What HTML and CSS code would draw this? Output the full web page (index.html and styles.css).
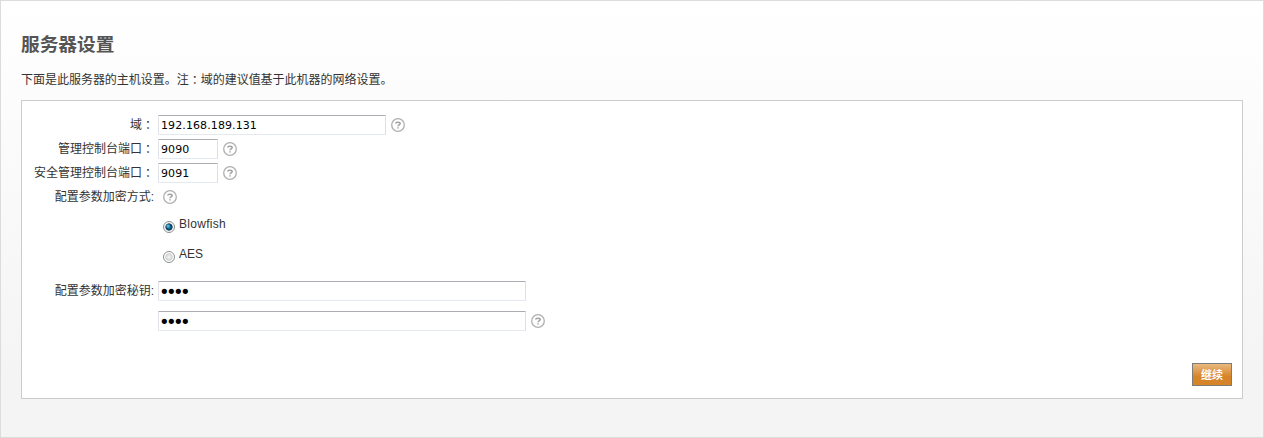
FILE: index.html
```
<!DOCTYPE html>
<html lang="zh-CN">
<head>
  <meta charset="UTF-8" />
  <title>服务器设置</title>
  <link rel="stylesheet" href="styles.css">
</head>
<body>

  <svg class="defs" width="0" height="0">
    <symbol id="help" viewBox="0 0 14 14">
      <circle cx="7" cy="7" r="6.3" fill="#fff" stroke="#b0b0b0" stroke-width="1.3" />
      <path d="M4.8 5.6C4.8 3.9 9.2 3.9 9.2 5.6C9.2 6.9 7 6.8 7 8.3M7 9.2V10.4" fill="none" stroke="#a0a0a0" stroke-width="1.5" />
    </symbol>
  </svg>

  <main>
    <h1>服务器设置</h1>
    <p>下面是此服务器的主机设置。注<span class="colon" lang="zh-TW">：</span>域的建议值基于此机器的网络设置。</p>

    <form class="panel">
      <div class="row">
        <label for="domain">域<span class="colon" lang="zh-TW">：</span></label>
        <input type="text" id="domain" class="medium" value="192.168.189.131">
        <svg class="help"><use href="#help" /></svg>
      </div>
      <div class="row">
        <label for="port">管理控制台端口<span class="colon" lang="zh-TW">：</span></label>
        <input type="text" id="port" class="short" value="9090">
        <svg class="help"><use href="#help" /></svg>
      </div>
      <div class="row">
        <label for="securePort">安全管理控制台端口<span class="colon" lang="zh-TW">：</span></label>
        <input type="text" id="securePort" class="short" value="9091">
        <svg class="help"><use href="#help" /></svg>
      </div>
      <div class="row">
        <label>配置参数加密方式:</label>
        <svg class="help"><use href="#help" /></svg>
      </div>

      <div class="options">
        <label class="option"><input type="radio" name="algorithm" checked><span>Blowfish</span></label>
        <label class="option"><input type="radio" name="algorithm"><span>AES</span></label>
      </div>

      <div class="row key">
        <label for="key">配置参数加密秘钥:</label>
        <input type="password" id="key" class="long" value="1234">
      </div>
      <div class="row key">
        <label></label>
        <input type="password" class="long" value="1234">
        <svg class="help"><use href="#help" /></svg>
      </div>

      <div class="buttons">
        <button type="button">继续</button>
      </div>
    </form>
  </main>

</body>
</html>
```
FILE: styles.css
```
* {
  box-sizing: border-box;
}

body {
  margin: 0;
  font-family: "Liberation Sans", "Noto Sans CJK SC", sans-serif;
  font-size: 12px;
  color: #333;
}

.defs {
  display: block;
}

main {
  height: 438px;
  padding: 31px 20px 0;
  border: 1px solid #dcdcdc;
  background: linear-gradient(#fff, #f4f4f4 380px);
}

h1 {
  margin: 0;
  font-size: 18.7px;
  line-height: 26px;
  color: #555;
}

p {
  margin: 13px 0 10px;
  line-height: 19px;
  letter-spacing: -0.02px;
}

/* the TC face centres the full-width colon */
.colon {
  font-family: "Noto Sans CJK TC", sans-serif;
  line-height: 1;
  vertical-align: -1px;
}

.panel {
  height: 299px;
  padding: 14px 10px 0 11px;
  border: 1px solid #ccc;
  background: #fff;
}

.row {
  display: flex;
  height: 20px;
  margin-bottom: 4px;
}

.row label {
  width: 121px;
  margin-right: 4px;
  line-height: 20px;
  text-align: right;
  white-space: nowrap;
}

input[type="text"],
input[type="password"] {
  height: 20px;
  margin: 0 5px 0 0;
  padding: 1px 2px 0;
  border: 1px solid;
  border-color: #abadb3 #dbdfe6 #e3e9ef #e2e3ea;
  border-radius: 1px;
  font-family: "DejaVu Sans", sans-serif;
  font-size: 11px;
  letter-spacing: 0.1px;
  color: #000;
  background: #fff;
}

input[type="password"] {
  padding-left: 0;
  font-size: 18px;
  letter-spacing: -3.6px;
}

.short {
  width: 60px;
}

.medium {
  width: 228px;
}

.long {
  width: 368px;
}

.help {
  width: 14px;
  height: 14px;
  margin-top: 3px;
}

.row label + .help {
  margin-left: 5px;
}

.options {
  padding: 3px 0 7px 130px;
}

.option {
  display: flex;
  height: 30px;
}

.option span {
  margin: 2px 0 0 4px;
  line-height: 16px;
  letter-spacing: 0.3px;
}

.option:last-child span {
  letter-spacing: 0;
}

input[type="radio"] {
  appearance: none;
  width: 12px;
  height: 12px;
  margin: 7px 0 0;
  border: 1px solid #8e8f8f;
  border-radius: 50%;
  background: radial-gradient(circle closest-side, #eee 20%, #ccd0d3 65%, #fff 85%);
}

input[type="radio"]:checked {
  background: radial-gradient(circle at 40% 40%, #6cd0f5, transparent 2.5px), radial-gradient(circle closest-side, #12709e 25%, #0b3550 65%, #e6e9eb 78%, #fff);
}

.key {
  margin-bottom: 10px;
}

.buttons {
  display: flex;
  justify-content: flex-end;
  margin-top: 32px;
}

button {
  width: 40px;
  height: 23px;
  padding: 0;
  border: 1px solid #7c7c7c;
  font-family: "Liberation Sans", "Noto Sans CJK SC", sans-serif;
  font-size: 11px;
  font-weight: bold;
  line-height: 22px;
  color: #fff;
  background: linear-gradient(#e9b981, #d6842a 60%, #d6842a);
}
```
